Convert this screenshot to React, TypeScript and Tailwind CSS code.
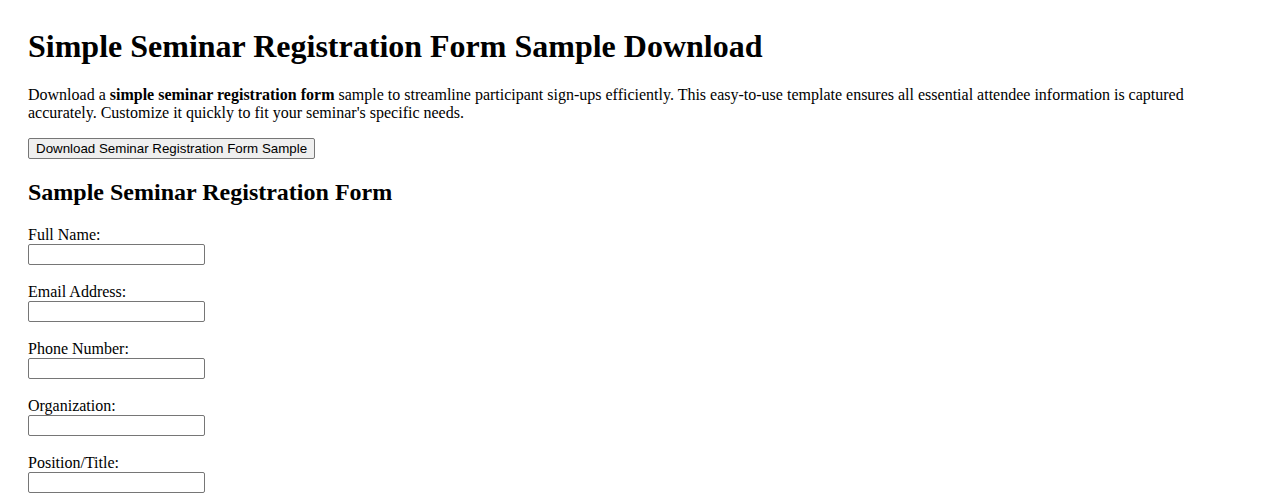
export default function App() {
  const fields = ["Full Name:", "Email Address:", "Phone Number:", "Organization:", "Position/Title:"];
  return (
    <div className="min-h-[501px] bg-white px-[28px] pt-[28px] text-black font-['Liberation_Serif',serif]">
      <h1 className="text-[32px] font-bold leading-[37px] mb-[21px]">Simple Seminar Registration Form Sample Download</h1>
      <p className="text-[16px] leading-[18px]">
        Download a <strong className="font-bold">simple seminar registration form</strong> sample to streamline participant sign-ups efficiently. This easy-to-use template ensures all essential attendee information is captured accurately. Customize it quickly to fit your seminar's specific needs.
      </p>
      <button
        type="button"
        className="mt-[16px] block h-[21px] px-[7px] bg-[#efefef] border border-[#767676] rounded-[2px] text-[13.33px] leading-[15px] font-['Liberation_Sans',Arial,sans-serif] text-black"
      >
        Download Seminar Registration Form Sample
      </button>
      <h2 className="mt-[20px] text-[24px] font-bold leading-[27px] mb-[20px]">Sample Seminar Registration Form</h2>
      <form className="flex flex-col gap-[18px]">
        {fields.map((f) => (
          <div key={f} className="flex flex-col items-start">
            <label className="text-[16px] leading-[18px]">{f}</label>
            <input
              type="text"
              className="w-[177px] h-[21px] px-[2px] py-[1px] border border-[#767676] rounded-[2px] text-[13.33px] font-['Liberation_Sans',Arial,sans-serif] bg-white"
            />
          </div>
        ))}
      </form>
    </div>
  );
}
